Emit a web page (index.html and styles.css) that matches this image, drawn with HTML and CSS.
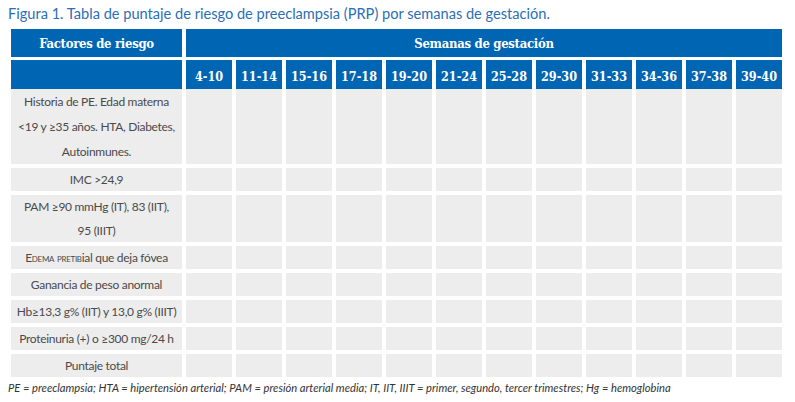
FILE: index.html
```html
<!DOCTYPE html>
<html lang="es">
<head>
<meta charset="utf-8">
<link rel="stylesheet" href="styles.css">
</head>
<body>
<p class="title">Figura 1. Tabla de puntaje de riesgo de preeclampsia (PRP) por semanas de gestación.</p>
<div class="table">
  <div class="head">
    <div class="h h-left">Factores de riesgo</div>
    <div class="h h-span">Semanas de gestación</div>
    <div class="h"></div>
    <div class="h wk">4-10</div>
    <div class="h wk">11-14</div>
    <div class="h wk">15-16</div>
    <div class="h wk">17-18</div>
    <div class="h wk">19-20</div>
    <div class="h wk">21-24</div>
    <div class="h wk">25-28</div>
    <div class="h wk">29-30</div>
    <div class="h wk">31-33</div>
    <div class="h wk">34-36</div>
    <div class="h wk">37-38</div>
    <div class="h wk">39-40</div>
  </div>
  <div class="body">
    <div class="c lab l3">Historia de PE. Edad materna<br>&lt;19 y ≥35 años. HTA, Diabetes,<br>Autoinmunes.</div>
    <div class="c"></div><div class="c"></div><div class="c"></div><div class="c"></div><div class="c"></div><div class="c"></div><div class="c"></div><div class="c"></div><div class="c"></div><div class="c"></div><div class="c"></div><div class="c"></div>
    <div class="c lab">IMC &gt;24,9</div>
    <div class="c"></div><div class="c"></div><div class="c"></div><div class="c"></div><div class="c"></div><div class="c"></div><div class="c"></div><div class="c"></div><div class="c"></div><div class="c"></div><div class="c"></div><div class="c"></div>
    <div class="c lab l2">PAM ≥90 mmHg (IT), 83 (IIT),<br>95 (IIIT)</div>
    <div class="c"></div><div class="c"></div><div class="c"></div><div class="c"></div><div class="c"></div><div class="c"></div><div class="c"></div><div class="c"></div><div class="c"></div><div class="c"></div><div class="c"></div><div class="c"></div>
    <div class="c lab"><span class="sc">Edema pretib</span>ial que deja fóvea</div>
    <div class="c"></div><div class="c"></div><div class="c"></div><div class="c"></div><div class="c"></div><div class="c"></div><div class="c"></div><div class="c"></div><div class="c"></div><div class="c"></div><div class="c"></div><div class="c"></div>
    <div class="c lab">Ganancia de peso anormal</div>
    <div class="c"></div><div class="c"></div><div class="c"></div><div class="c"></div><div class="c"></div><div class="c"></div><div class="c"></div><div class="c"></div><div class="c"></div><div class="c"></div><div class="c"></div><div class="c"></div>
    <div class="c lab">Hb≥13,3 g% (IIT) y 13,0 g% (IIIT)</div>
    <div class="c"></div><div class="c"></div><div class="c"></div><div class="c"></div><div class="c"></div><div class="c"></div><div class="c"></div><div class="c"></div><div class="c"></div><div class="c"></div><div class="c"></div><div class="c"></div>
    <div class="c lab">Proteinuria (+) o ≥300 mg/24 h</div>
    <div class="c"></div><div class="c"></div><div class="c"></div><div class="c"></div><div class="c"></div><div class="c"></div><div class="c"></div><div class="c"></div><div class="c"></div><div class="c"></div><div class="c"></div><div class="c"></div>
    <div class="c lab">Puntaje total</div>
    <div class="c"></div><div class="c"></div><div class="c"></div><div class="c"></div><div class="c"></div><div class="c"></div><div class="c"></div><div class="c"></div><div class="c"></div><div class="c"></div><div class="c"></div><div class="c"></div>
  </div>
</div>
<p class="foot">PE = preeclampsia; HTA = hipertensión arterial; PAM = presión arterial media; IT, IIT, IIIT = primer, segundo, tercer trimestres; Hg = hemoglobina</p>
</body>
</html>
```

FILE: styles.css
```css
html, body {
  margin: 0;
  padding: 0;
  background: #ffffff;
}
.title {
  margin: 0;
  padding: 5px 0 0 8px;
  height: 24px;
  box-sizing: border-box;
  font-family: Lato, "Open Sans", sans-serif;
  font-size: 14.6px;
  line-height: 18px;
  color: #2a6fb5;
  white-space: nowrap;
}
.table {
  margin-left: 11px;
  width: 771px;
  padding-top: 5px;
}
.head, .body {
  display: grid;
  grid-template-columns: 171px repeat(12, 46px);
  column-gap: 4px;
}
.head {
  grid-template-rows: 28px 29px;
  row-gap: 3px;
}
.body {
  grid-template-rows: 75px 23px 47px 23px 23px 23px 23px 23px;
  row-gap: 4px;
}
.h {
  background: #0066b3;
  color: #ffffff;
  font-family: "DejaVu Serif Condensed", "DejaVu Serif", serif;
  font-weight: bold;
  display: flex;
  align-items: center;
  justify-content: center;
  white-space: nowrap;
}
.h-left {
  font-size: 13px;
  letter-spacing: -0.3px;
}
.h-span {
  grid-column: 2 / span 12;
  font-size: 13px;
  letter-spacing: -0.3px;
}
.wk {
  font-size: 12.5px;
  padding-top: 3px;
  box-sizing: border-box;
}
.c {
  background: #ededed;
}
.lab {
  display: flex;
  align-items: center;
  justify-content: center;
  text-align: center;
  font-family: Lato, "Open Sans", sans-serif;
  font-size: 12px;
  letter-spacing: -0.3px;
  line-height: 23px;
  color: #4a4a4a;
  white-space: nowrap;
}
.l3 {
  line-height: 25px;
}
.l2 {
  line-height: 23.5px;
}
.sc {
  font-variant: small-caps;
}
.foot {
  margin: 0;
  padding: 4px 0 0 8px;
  font-family: Lato, "Open Sans", sans-serif;
  font-style: italic;
  font-size: 11.2px;
  line-height: 14px;
  color: #333333;
  white-space: nowrap;
}
```
